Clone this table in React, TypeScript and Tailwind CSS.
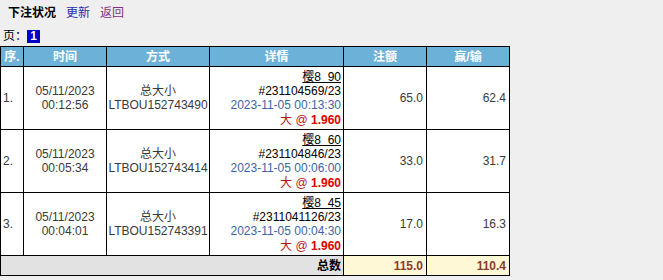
const rows = [
  { no: "1.", date: "05/11/2023", time: "00:12:56", code: "LTBOU152743490", game: "樱8\u00a0\u00a090", issue: "#231104569/23", at: "2023-11-05 00:13:30", stake: "65.0", win: "62.4" },
  { no: "2.", date: "05/11/2023", time: "00:05:34", code: "LTBOU152743414", game: "樱8\u00a0\u00a060", issue: "#231104846/23", at: "2023-11-05 00:06:00", stake: "33.0", win: "31.7" },
  { no: "3.", date: "05/11/2023", time: "00:04:01", code: "LTBOU152743391", game: "樱8\u00a0\u00a045", issue: "#2311041126/23", at: "2023-11-05 00:04:30", stake: "17.0", win: "16.3" },
];

export default function App() {
  return (
    <div
      className="h-[280px] w-[663px] bg-[#efefef] text-[12px] leading-[14px] text-[#3a3a3a]"
      style={{ fontFamily: '"Liberation Sans", Arial, "Noto Sans CJK SC", sans-serif' }}
    >
      <div className="flex h-[26px] items-center gap-[10px] pl-[8px]">
        <span className="font-bold text-black">下注状况</span>
        <span className="text-[#2a2aa8]">更新</span>
        <span className="text-[#80307f]">返回</span>
      </div>
      <div className="flex h-[20px] items-center pl-[3px] text-black">
        <span>页：</span>
        <span className="flex h-[13px] w-[13px] items-center justify-center bg-[#0000c8] font-bold text-white">1</span>
      </div>
      <table className="w-[509px] table-fixed border-collapse border border-black">
        <colgroup>
          <col className="w-[23px]" />
          <col className="w-[83px]" />
          <col className="w-[103px]" />
          <col className="w-[134px]" />
          <col className="w-[83px]" />
          <col className="w-[83px]" />
        </colgroup>
        <thead>
          <tr className="h-[20px] bg-[#6cb2d8] font-bold text-white">
            <th className="border border-black p-0 text-center">序.</th>
            <th className="border border-black p-0">时间</th>
            <th className="border border-black p-0">方式</th>
            <th className="border border-black p-0">详情</th>
            <th className="border border-black p-0">注额</th>
            <th className="border border-black p-0">赢/输</th>
          </tr>
        </thead>
        <tbody>
          {rows.map((r) => (
            <tr key={r.no} className="h-[63px] bg-white">
              <td className="border border-black pl-[2px] align-middle">{r.no}</td>
              <td className="border border-black text-center align-middle">
                <div>{r.date}</div>
                <div>{r.time}</div>
              </td>
              <td className="border border-black text-center align-middle">
                <div>总大小</div>
                <div>{r.code}</div>
              </td>
              <td className="border border-black pr-[2px] text-right align-middle">
                <div className="text-black underline">{r.game}</div>
                <div className="text-black">{r.issue}</div>
                <div className="text-[#3d64a8]">{r.at}</div>
                <div className="mt-[1px] text-[#b01818]">
                  大 @ <span className="font-bold text-[#e00000]">1.960</span>
                </div>
              </td>
              <td className="border border-black pr-[3px] text-right align-middle">{r.stake}</td>
              <td className="border border-black pr-[3px] text-right align-middle">{r.win}</td>
            </tr>
          ))}
          <tr className="h-[20px] font-bold">
            <td colSpan={4} className="border border-black bg-[#e2e2e2] pr-[2px] text-right text-black">总数</td>
            <td className="border border-black bg-[#fff8d6] pr-[3px] text-right text-[#8a3b2e]">115.0</td>
            <td className="border border-black bg-[#fff8d6] pr-[3px] text-right text-[#8a3b2e]">110.4</td>
          </tr>
        </tbody>
      </table>
    </div>
  );
}
